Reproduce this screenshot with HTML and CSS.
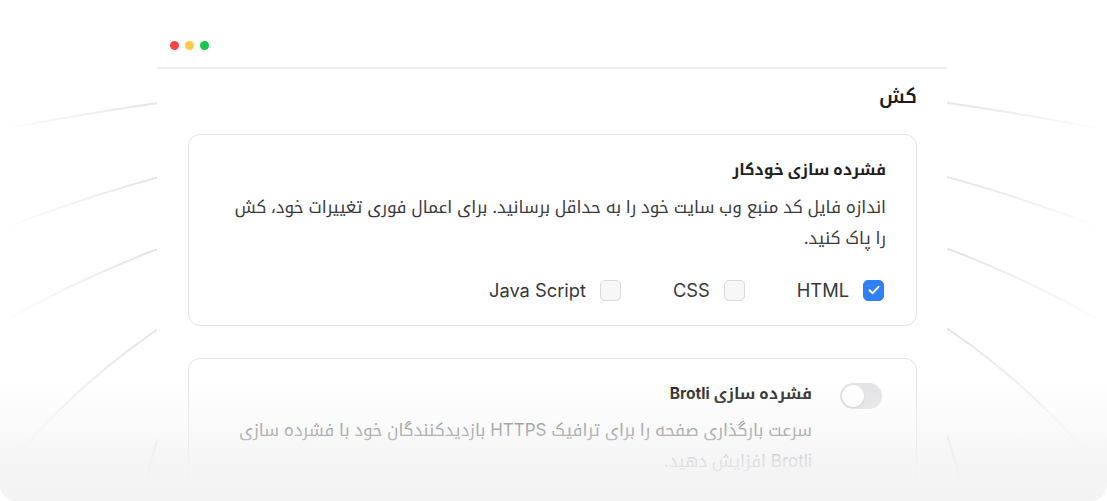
FILE: index.html
```html
<!DOCTYPE html>
<html lang="fa">
<head>
<meta charset="utf-8">
<title>کش</title>
<link rel="stylesheet" href="styles.css">
</head>
<body>
<div class="frame">
  <svg class="arcs" width="1107" height="501" viewBox="0 0 1107 501" aria-hidden="true">
    <defs>
      <linearGradient id="arcfade" gradientUnits="userSpaceOnUse" x1="0" y1="0" x2="1107" y2="0">
        <stop offset="0" stop-color="#e6e6e6" stop-opacity="0"/>
        <stop offset="0.13" stop-color="#e6e6e6" stop-opacity="1"/>
        <stop offset="0.87" stop-color="#e6e6e6" stop-opacity="1"/>
        <stop offset="1" stop-color="#e6e6e6" stop-opacity="0"/>
      </linearGradient>
    </defs>
    <g fill="none" stroke="url(#arcfade)" stroke-width="2">
      <circle cx="553" cy="2878" r="2803"/>
      <circle cx="553" cy="1639" r="1514"/>
      <circle cx="553" cy="1284" r="1108"/>
      <circle cx="553" cy="912" r="704"/>
      <circle cx="553" cy="575" r="418"/>
    </g>
  </svg>

  <div class="window">
    <div class="titlebar">
      <span class="dot dot-red"></span>
      <span class="dot dot-yellow"></span>
      <span class="dot dot-green"></span>
    </div>
    <div class="content" dir="rtl">
      <h1 class="page-title">کش</h1>

      <section class="card">
        <h2 class="card-title">فشرده سازی خودکار</h2>
        <p class="card-desc">اندازه فایل کد منبع وب سایت خود را به حداقل برسانید. برای اعمال فوری تغییرات خود، کش را پاک کنید.</p>
        <div class="options">
          <label class="option">
            <span class="box box-checked">
              <svg width="12" height="10" viewBox="0 0 12 10"><path d="M1.5 5.2 L4.6 8.2 L10.5 1.8" fill="none" stroke="#fff" stroke-width="1.9" stroke-linecap="round" stroke-linejoin="round"/></svg>
            </span>
            <span class="option-label" dir="ltr">HTML</span>
          </label>
          <label class="option">
            <span class="box"></span>
            <span class="option-label" dir="ltr">CSS</span>
          </label>
          <label class="option">
            <span class="box"></span>
            <span class="option-label" dir="ltr">Java Script</span>
          </label>
        </div>
      </section>

      <section class="card card-toggle">
        <span class="toggle"><span class="knob"></span></span>
        <div class="toggle-text">
          <h2 class="card-title">فشرده سازی Brotli</h2>
          <p class="card-desc muted">سرعت بارگذاری صفحه را برای ترافیک HTTPS بازدیدکنندگان خود با فشرده سازی Brotli افزایش دهید.</p>
        </div>
      </section>
    </div>
  </div>

  <div class="fade"></div>
</div>
</body>
</html>
```

FILE: styles.css
```css
* { box-sizing: border-box; }

html, body {
  margin: 0;
  padding: 0;
  background: #ffffff;
}

body {
  font-family: Inter, "Noto Kufi Arabic", "DejaVu Sans", sans-serif;
  color: #222;
}

.frame {
  position: relative;
  width: 1107px;
  height: 501px;
  overflow: hidden;
  border-radius: 16px;
  background: #ffffff;
}

.arcs {
  position: absolute;
  left: 0;
  top: 0;
}

.window {
  position: relative;
  width: 790px;
  margin: 24px 0 0 157px;
  background: #ffffff;
  min-height: 477px;
}

.titlebar {
  height: 45px;
  display: flex;
  align-items: center;
  gap: 6px;
  padding: 0 0 0 13px;
  border-bottom: 2px solid #efefef;
}

.dot {
  width: 9px;
  height: 9px;
  border-radius: 50%;
}
.dot-red { background: #ff4343; }
.dot-yellow { background: #ffc944; }
.dot-green { background: #17c94c; }

.content {
  padding: 0 30px 0 31px;
}

.page-title {
  margin: 13px 0 22px;
  font-size: 19px;
  line-height: 30px;
  font-weight: 600;
  color: #1c1c1e;
}

.card {
  border: 1px solid #e4e4e7;
  border-radius: 12px;
  padding: 23px 30px 23px 33px;
  background: #fff;
}

.card + .card {
  margin-top: 32px;
}

.card-title {
  margin: 0;
  font-size: 15.6px;
  line-height: 24px;
  font-weight: 700;
  color: #1f1f22;
}

.card-desc {
  margin: 10px 0 0;
  font-size: 17px;
  line-height: 31px;
  color: #3a3a3e;
}

.options {
  display: flex;
  gap: 52px;
  margin-top: 24px;
}

.option {
  display: flex;
  align-items: center;
  gap: 14px;
  margin-right: 2px;
}

.option + .option { margin-right: 0; }

.box {
  width: 21px;
  height: 21px;
  border-radius: 5px;
  border: 1.5px solid #d9d9de;
  background: #f7f7f8;
  display: flex;
  align-items: center;
  justify-content: center;
}

.box-checked {
  background: #2f80f5;
  border-color: #2f80f5;
}

.option-label {
  font-size: 18.3px;
  line-height: 24px;
  color: #38383c;
}

.card-toggle {
  display: flex;
  align-items: flex-start;
  gap: 28px;
  padding: 23px 34px 30px 33px;
}

.toggle {
  flex: none;
  width: 42px;
  height: 26px;
  border-radius: 13px;
  background: #e3e3e7;
  display: flex;
  align-items: center;
  justify-content: flex-end;
  padding: 0 2px;
  margin-top: 1px;
}

.knob {
  width: 22px;
  height: 22px;
  border-radius: 50%;
  background: #fff;
  box-shadow: 0 1px 2px rgba(0,0,0,0.12);
}

.toggle-text { flex: 1; }

.card-desc.muted {
  margin-top: 9px;
  color: #6e6e73;
}

.fade {
  position: absolute;
  left: 0;
  right: 0;
  bottom: 0;
  height: 120px;
  background: linear-gradient(to bottom, rgba(243,243,244,0) 0%, rgba(243,243,244,0.45) 40%, rgba(243,243,244,0.85) 68%, rgba(243,243,244,1) 90%);
  pointer-events: none;
}
```
